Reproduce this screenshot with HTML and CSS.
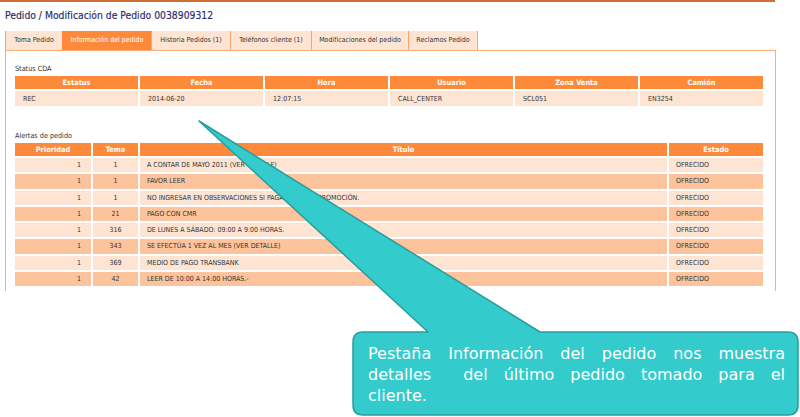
FILE: index.html
```html
<!DOCTYPE html>
<html lang="es">
<head>
<meta charset="utf-8">
<title>Pedido / Modificación de Pedido</title>
<link rel="stylesheet" href="styles.css">
</head>
<body>
<div class="topline"></div>
<h1 class="title">Pedido / Modificación de Pedido 0038909312</h1>
<div class="tabs">
  <div class="tab t1">Toma Pedido</div>
  <div class="tab t2 active">Información del pedido</div>
  <div class="tab t3">Historia Pedidos (1)</div>
  <div class="tab t4">Teléfonos cliente (1)</div>
  <div class="tab t5">Modificaciones del pedido</div>
  <div class="tab t6">Reclamos Pedido</div>
</div>
<div class="panel">
  <div class="label">Status CDA</div>
  <table class="grid status">
    <thead>
      <tr><th>Estatus</th><th>Fecha</th><th>Hora</th><th>Usuario</th><th>Zona Venta</th><th>Camión</th></tr>
    </thead>
    <tbody>
      <tr class="light"><td>REC</td><td>2014-06-20</td><td>12:07:15</td><td>CALL_CENTER</td><td>SCL051</td><td>EN3254</td></tr>
    </tbody>
  </table>
  <div class="label alerts-label">Alertas de pedido</div>
  <table class="grid alerts">
    <colgroup><col class="c-prio"><col class="c-tema"><col class="c-tit"><col class="c-est"></colgroup>
    <thead>
      <tr><th>Prioridad</th><th>Tema</th><th>Título</th><th>Estado</th></tr>
    </thead>
    <tbody>
      <tr class="light"><td class="num">1</td><td class="mid">1</td><td>A CONTAR DE MAYO 2011 (VER DETALLE)</td><td>OFRECIDO</td></tr>
      <tr class="dark"><td class="num">1</td><td class="mid">1</td><td>FAVOR LEER</td><td>OFRECIDO</td></tr>
      <tr class="light"><td class="num">1</td><td class="mid">1</td><td>NO INGRESAR EN OBSERVACIONES SI PAGA CON CMR PROMOCIÓN.</td><td>OFRECIDO</td></tr>
      <tr class="dark"><td class="num">1</td><td class="mid">21</td><td>PAGO CON CMR</td><td>OFRECIDO</td></tr>
      <tr class="light"><td class="num">1</td><td class="mid">316</td><td>DE LUNES A SÁBADO: 09:00 A 9:00 HORAS.</td><td>OFRECIDO</td></tr>
      <tr class="dark"><td class="num">1</td><td class="mid">343</td><td>SE EFECTÚA 1 VEZ AL MES (VER DETALLE)</td><td>OFRECIDO</td></tr>
      <tr class="light"><td class="num">1</td><td class="mid">369</td><td>MEDIO DE PAGO TRANSBANK</td><td>OFRECIDO</td></tr>
      <tr class="dark"><td class="num">1</td><td class="mid">42</td><td>LEER DE 10:00 A 14:00 HORAS.-</td><td>OFRECIDO</td></tr>
    </tbody>
  </table>
</div>

<div class="callout">
  <svg class="callout-shape" width="800" height="417" viewBox="0 0 800 417">
    <path d="M363 332 L428 332 L199 121 L540 332 L788 332 Q798 332 798 342 L798 405 Q798 415 788 415 L363 415 Q353 415 353 405 L353 342 Q353 332 363 332 Z" fill="#33cbcb" stroke="#2a9c9c" stroke-width="1.5" stroke-linejoin="round"/>
  </svg>
  <div class="callout-text">
    <span class="jline">Pestaña Información del pedido nos muestra</span>
    <span class="jline">detalles&nbsp; del último pedido tomado para el</span>
    <span class="lline">cliente.</span>
  </div>
</div>
</body>
</html>
```
FILE: styles.css
```css
html, body {
  margin: 0;
  padding: 0;
  background: #ffffff;
}
body {
  width: 800px;
  height: 417px;
  overflow: hidden;
  position: relative;
  font-family: "DejaVu Sans Condensed", "DejaVu Sans", sans-serif;
  font-stretch: condensed;
  color: #333333;
}
.topline {
  width: 775px;
  height: 2px;
  background: #cf6f38;
}
.title {
  margin: 0;
  height: 29px;
  line-height: 26px;
  padding-left: 5px;
  font-size: 10.3px;
  font-weight: normal;
  color: #2c2b6a;
  -webkit-text-stroke: 0.15px #2c2b6a;
}
.tabs {
  display: flex;
  margin-left: 5px;
  height: 19px;
}
.tab {
  box-sizing: border-box;
  height: 19px;
  line-height: 19px;
  text-align: center;
  font-size: 7px;
  background: #fde4d3;
  border-left: 1px solid #f8a66e;
  color: #333333;
}
.tab.t6 { border-right: 1px solid #f8a66e; }
.tab.active {
  background: #fd8a3b;
  color: #ffffff;
  border-left-color: #fd8a3b;
}
.t1 { width: 57px; }
.t2 { width: 89px; }
.t3 { width: 79px; }
.t4 { width: 81px; }
.t5 { width: 97px; }
.t6 { width: 70px; }
.panel {
  box-sizing: border-box;
  width: 771px;
  margin-left: 5px;
  border: 1px solid #fbac78;
  border-bottom: none;
  padding: 13px 10px 3px 7px;
}
.label {
  height: 10px;
  line-height: 10px;
  font-size: 7.2px;
  color: #333333;
  padding-left: 2px;
}
.alerts-label {
  margin-top: 23px;
}
.grid {
  border-collapse: separate;
  border-spacing: 2px;
  table-layout: fixed;
  width: 752px;
  font-size: 7px;
}
.grid th {
  background: #fd8a3b;
  color: #ffffff;
  font-weight: bold;
  height: 13px;
  padding: 0;
  text-align: center;
  font-size: 7.4px;
}
.grid td {
  padding: 0 0 0 7px;
  text-align: left;
  color: #333333;
}
.status td {
  height: 15px;
  padding-left: 8px;
}
.alerts td {
  height: 14.25px;
}
.grid tr.light td { background: #fde4d3; }
.grid tr.dark td { background: #fdc39c; }
.alerts td.num {
  text-align: right;
  padding: 0 10px 0 0;
}
.alerts td.mid {
  text-align: center;
  padding: 0;
}
.c-prio { width: 76px; }
.c-tema { width: 45px; }
.c-tit { width: 527px; }
.c-est { width: 94px; }

.callout {
  position: absolute;
  left: 0;
  top: 0;
  width: 800px;
  height: 417px;
  pointer-events: none;
}
.callout-shape {
  position: absolute;
  left: 0;
  top: 0;
}
.callout-text {
  position: absolute;
  left: 368px;
  top: 343px;
  width: 417px;
  font-family: "DejaVu Sans", Verdana, sans-serif;
  font-stretch: normal;
  font-size: 16px;
  line-height: 21px;
  color: #ffffff;
}
.jline {
  display: block;
  text-align: justify;
  text-align-last: justify;
}
.lline {
  display: block;
  text-align: left;
}
```
